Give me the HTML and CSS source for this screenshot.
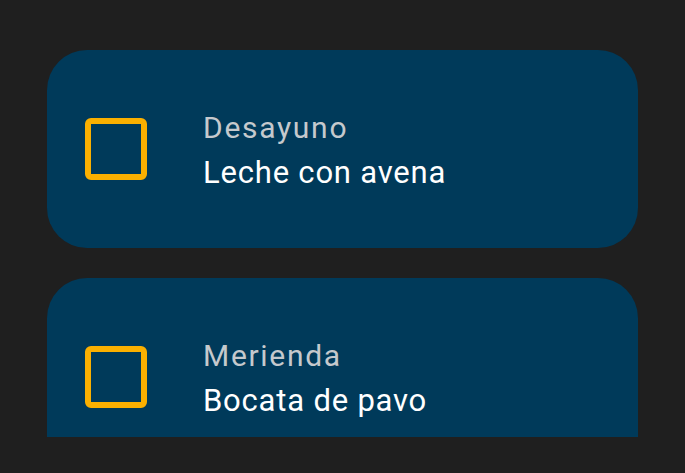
FILE: index.html
```html
<!DOCTYPE html>
<html lang="es">
<head>
<meta charset="utf-8">
<link rel="stylesheet" href="styles.css">
</head>
<body>
<main class="list">
  <div class="card">
    <span class="check"></span>
    <div class="texts">
      <div class="label">Desayuno</div>
      <div class="value">Leche con avena</div>
    </div>
  </div>
  <div class="card">
    <span class="check"></span>
    <div class="texts">
      <div class="label">Merienda</div>
      <div class="value">Bocata de pavo</div>
    </div>
  </div>
</main>
</body>
</html>
```
FILE: styles.css
```css
html, body {
  margin: 0;
  padding: 0;
  background: #1f1f1f;
  width: 685px;
  height: 473px;
  overflow: hidden;
  font-family: Roboto, "Noto Sans", sans-serif;
}
.list {
  margin-left: 47px;
  width: 591px;
  height: 387px;
  padding-top: 50px;
  overflow: hidden;
  display: flex;
  flex-direction: column;
  gap: 30px;
}
.card {
  flex: none;
  height: 198px;
  background: #003a5a;
  border-radius: 40px;
  display: flex;
  align-items: center;
  padding-left: 38px;
  box-sizing: border-box;
}
.check {
  width: 62px;
  height: 62px;
  box-sizing: border-box;
  border: 6.5px solid #fbb000;
  border-radius: 6px;
  flex: none;
}
.texts {
  margin-left: 56px;
  padding-top: 4px;
  display: flex;
  flex-direction: column;
}
.label {
  color: #c5c9cd;
  font-size: 30px;
  line-height: 40px;
  letter-spacing: 1.7px;
}
.value {
  color: #ffffff;
  font-size: 31px;
  line-height: 44px;
  margin-top: 3px;
  letter-spacing: 0.8px;
}
```
